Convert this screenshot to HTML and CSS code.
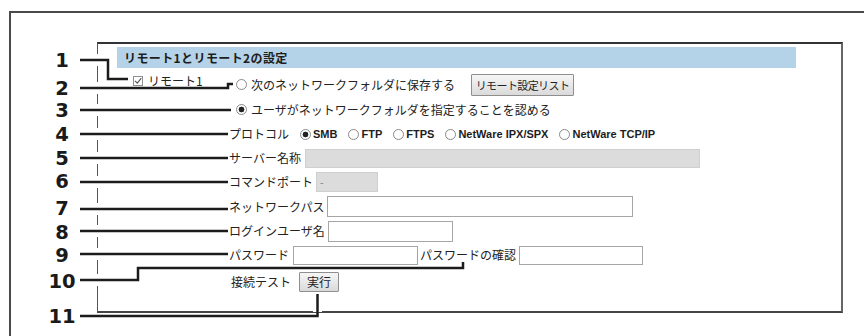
FILE: index.html
```html
<!DOCTYPE html>
<html>
<head>
<meta charset="utf-8">
<link rel="stylesheet" href="styles.css">
</head>
<body>
<div class="frame">
  <div class="shot">
    <div class="title">リモート1とリモート2の設定</div>
    <div class="body">
      <div class="left">
        <div class="chk">
          <svg class="box" width="10" height="10" viewBox="0 0 10 10"><rect x="0.5" y="0.5" width="9" height="9" fill="#fff" stroke="#8f8f8f"/><path d="M2 4.8 L4.3 7.2 L8.3 2.2" fill="none" stroke="#555" stroke-width="1.1"/></svg>
          <span>リモート1</span>
        </div>
      </div>
      <div class="right">
        <div class="row r2">
          <span class="radio first"></span><span>次のネットワークフォルダに保存する</span>
          <span class="btn wide">リモート設定リスト</span>
        </div>
        <div class="row r2">
          <span class="radio first on"></span><span>ユーザがネットワークフォルダを指定することを認める</span>
        </div>
        <div class="row">
          <span>プロトコル</span>
          <span class="opt"><span class="radio on"></span><span class="lat">SMB</span></span>
          <span class="opt"><span class="radio"></span><span class="lat">FTP</span></span>
          <span class="opt"><span class="radio"></span><span class="lat">FTPS</span></span>
          <span class="opt"><span class="radio"></span><span class="lat">NetWare IPX/SPX</span></span>
          <span class="opt"><span class="radio"></span><span class="lat">NetWare TCP/IP</span></span>
        </div>
        <div class="row">
          <span>サーバー名称</span><span class="field off server"></span>
        </div>
        <div class="row">
          <span>コマンドポート</span><span class="field off port">-</span>
        </div>
        <div class="row r7">
          <span>ネットワークパス</span><span class="field path"></span>
        </div>
        <div class="row">
          <span>ログインユーザ名</span><span class="field user"></span>
        </div>
        <div class="row">
          <span>パスワード</span><span class="field pass"></span>
          <span>パスワードの確認</span><span class="field pass2"></span>
        </div>
        <div class="row test">
          <span>接続テスト</span><span class="btn run">実行</span>
        </div>
      </div>
    </div>
  </div>
</div>

<svg class="callouts" width="864" height="336" viewBox="0 0 864 336">
  <g fill="#fff">
    <rect x="94" y="54" width="6" height="12"/>
    <rect x="94" y="82" width="6" height="12"/>
    <rect x="94" y="104" width="6" height="12"/>
    <rect x="94" y="128" width="6" height="12"/>
    <rect x="94" y="152" width="6" height="12"/>
    <rect x="94" y="176" width="6" height="12"/>
    <rect x="94" y="203" width="6" height="12"/>
    <rect x="94" y="225" width="6" height="12"/>
    <rect x="94" y="248" width="6" height="12"/>
    <rect x="94" y="274" width="6" height="12"/>
    <rect x="313" y="306" width="9" height="6"/>
  </g>
  <g fill="none" stroke="#1c1c1c" stroke-width="2.5">
    <path d="M80 60 H108 V79 H128"/>
    <path d="M80 88 H228 V84 H233"/>
    <path d="M80 110 H231"/>
    <path d="M80 134 H228"/>
    <path d="M80 158 H228"/>
    <path d="M80 182 H228"/>
    <path d="M80 209 H228"/>
    <path d="M80 231 H228"/>
    <path d="M80 254 H228"/>
    <path d="M80 280 H138 V268 H463 V262"/>
    <path d="M80 316 H317.5 V294"/>
  </g>
  <g class="num" text-anchor="middle">
    <text x="62" y="67">1</text>
    <text x="62" y="95">2</text>
    <text x="62" y="117">3</text>
    <text x="62" y="141">4</text>
    <text x="62" y="165">5</text>
    <text x="62" y="188">6</text>
    <text x="62" y="215">7</text>
    <text x="62" y="239">8</text>
    <text x="62" y="262">9</text>
    <text x="62" y="288">10</text>
    <text x="62" y="323">11</text>
  </g>
</svg>
</body>
</html>
```

FILE: styles.css
```css
html, body {
  margin: 0;
  padding: 0;
  background-color: #fff;
}
body {
  width: 864px;
  height: 336px;
  overflow: hidden;
  position: relative;
  font-family: "Noto Sans CJK JP", sans-serif;
}

.frame {
  margin: 11px 0 0 9px;
  height: 325px;
  border-top: 2px solid #4a4a4a;
  border-left: 2px solid #4a4a4a;
}

.shot {
  margin: 29px 0 0 86px;
  width: 724px;
  height: 264px;
  border-top: 2px solid #333;
  border-right: 2px solid #666;
  border-bottom: 2px solid #444;
  border-left: 1px solid #555;
  padding: 3px 0 0 19px;
  box-sizing: content-box;
  font-size: 12px;
  color: #222;
}

.title {
  width: 672px;
  height: 21px;
  line-height: 21px;
  padding-left: 7px;
  background-color: #b5d3e8;
  font-weight: bold;
  letter-spacing: 0.4px;
  color: #1d1d1d;
}

.body {
  display: flex;
}
.left {
  width: 112px;
}
.chk {
  display: flex;
  align-items: center;
  gap: 5px;
  margin: 5px 0 0 16px;
  line-height: 16px;
}
.right {
  margin-top: 4px;
}

.row {
  display: flex;
  align-items: center;
  gap: 3px;
  height: 24px;
  line-height: 16px;
  white-space: nowrap;
}
.r2 { height: 25px; gap: 4px; }
.r7 { height: 25px; }
.test { margin-top: 3px; }

.radio {
  display: inline-block;
  width: 9px;
  height: 9px;
  border: 1px solid #8a8a8a;
  border-radius: 50%;
  background-color: #fff;
  flex: none;
}
.radio.on {
  background: radial-gradient(circle, #222 0, #222 2.6px, #fff 3.2px);
}
.radio.first { margin-left: 7px; }

.opt {
  display: flex;
  align-items: center;
  gap: 2px;
  margin-left: 8px;
}

.lat {
  font-family: "Liberation Sans", Arial, sans-serif;
  font-weight: bold;
  font-size: 11px;
  color: #1d1d1d;
}

.field {
  display: inline-block;
  box-sizing: border-box;
  height: 20px;
  border: 1px solid #a6a6a6;
  background-color: #fff;
  font-family: "Liberation Sans", Arial, sans-serif;
  font-size: 11px;
  line-height: 18px;
  padding-left: 3px;
  color: #888;
}
.field.off {
  background-color: #dcdcdc;
  border-color: #cfcfcf;
}
.server { width: 395px; height: 19px; margin-left: 1px; }
.port { width: 62px; }
.path { width: 306px; height: 21px; }
.user { width: 125px; height: 21px; }
.pass { width: 125px; height: 19px; margin-left: 1px; margin-right: -1px; }
.pass2 { width: 124px; height: 19px; }

.btn {
  display: inline-block;
  box-sizing: border-box;
  border: 1px solid #8e8e8e;
  border-radius: 1px;
  background: linear-gradient(#f6f6f6, #dadada);
  text-align: center;
  color: #222;
}
.btn.wide {
  width: 103px;
  height: 22px;
  line-height: 20px;
  margin-left: 12px;
  font-size: 11px;
  letter-spacing: -0.6px;
}
.btn.run {
  width: 40px;
  height: 20px;
  line-height: 18px;
  margin-left: 5px;
}
.test span:first-child { margin-left: 2px; }

.callouts {
  position: absolute;
  top: 0;
  left: 0;
  pointer-events: none;
}
.num {
  font-family: "DejaVu Sans", sans-serif;
  font-weight: bold;
  font-size: 19.5px;
  fill: #1a1a1a;
}
```
